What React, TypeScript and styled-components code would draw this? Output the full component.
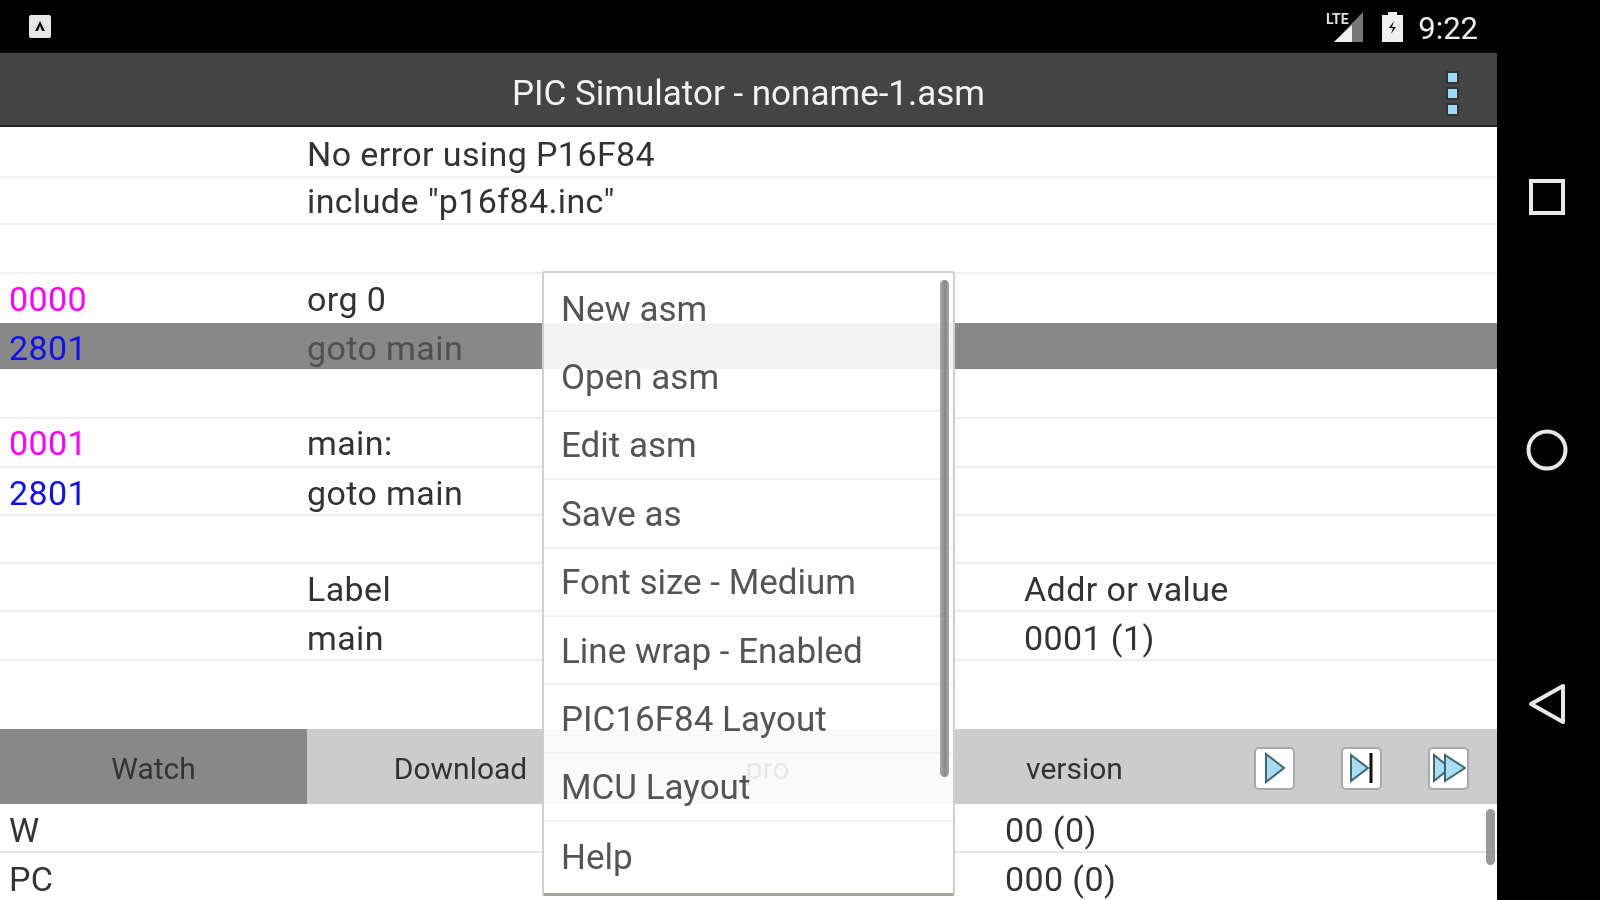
import React from 'react';
import styled, { createGlobalStyle } from 'styled-components';

const Global = createGlobalStyle`
  html, body { margin: 0; padding: 0; background: #000; }
  body { width: 1600px; height: 900px; overflow: hidden; font-family: Roboto, "Liberation Sans", sans-serif; }
`;

const Device = styled.div`
  width: 1600px; height: 900px; display: grid; grid-template-columns: 1497px 103px;
  background: #000; overflow: hidden; filter: blur(0.7px);
`;
const Main = styled.div`
  position: relative; display: flex; flex-direction: column; height: 900px; overflow: hidden; background: #fff;
`;
const StatusBar = styled.div`
  height: 53px; flex: none; background: #000; display: flex; align-items: center; padding: 0 19px 0 28px; color: #f0f0f0;
`;
const StatusRight = styled.div`
  margin-left: auto; display: flex; align-items: center;
`;
const Clock = styled.span`
  font-size: 31px; font-weight: 400; margin-left: 15px; padding-top: 4px; color: #eee;
`;
const AppBar = styled.div`
  position: relative; height: 64px; flex: none; background: #444; border-bottom: 2px solid #222;
  display: flex; align-items: center; justify-content: center; padding-top: 8px; box-sizing: content-box;
`;
const Title = styled.div`
  color: #f2f2f2; font-size: 35px; font-weight: 400; white-space: nowrap;
`;
const Kebab = styled.div`
  position: absolute; right: 40px; top: 20px; display: flex; flex-direction: column; gap: 7px;
`;
const Dot = styled.span`
  display: block; width: 9px; height: 9px; background: #9adcf2; box-shadow: 0 0 0 2px #333;
`;
const Row = styled.div<{ $h: number; $active?: boolean; $line?: boolean; $tight?: boolean }>`
  height: ${p => p.$h}px; flex: none; box-sizing: border-box;
  display: grid; grid-template-columns: 307px 717px 1fr; align-items: center;
  padding-top: ${p => (p.$tight ? '0' : '4px')};
  background: ${p => (p.$active ? '#888' : '#fff')};
  border-bottom: ${p => (p.$active ? '0' : p.$line === false ? '0' : '2px solid #eee')};
  font-size: 34px; letter-spacing: 0.4px; color: ${p => (p.$active ? '#505050' : '#333')}; white-space: nowrap;
`;
const Cell = styled.span<{ $color?: string }>`
  padding-left: ${p => (p.$color ? '9px' : '0')};
  color: ${p => p.$color || 'inherit'};
`;
const WatchRow = styled.div<{ $h: number; $line?: boolean }>`
  height: ${p => p.$h}px; flex: none; box-sizing: border-box;
  display: grid; grid-template-columns: 1005px 1fr; align-items: center; padding-top: 4px;
  border-bottom: ${p => (p.$line ? '2px solid #e6e6e6' : '0')};
  font-size: 34px; letter-spacing: 0.4px; color: #333; white-space: nowrap;
`;
const WatchName = styled.span`
  padding-left: 9px;
`;
const Toolbar = styled.div`
  height: 75px; flex: none; display: flex; background: #ccc;
`;
const Tab = styled.div<{ $active?: boolean }>`
  width: 307px; flex: none; display: flex; align-items: center; justify-content: center;
  padding-top: 3px; box-sizing: border-box;
  background: ${p => (p.$active ? '#888' : 'transparent')};
  font-size: 30px; color: #333;
`;
const ToolButtons = styled.div`
  display: flex; align-items: center; gap: 46px; margin-left: 26px;
`;
const ToolButton = styled.div`
  width: 41px; height: 43px; box-sizing: border-box; background: #fff; border: 2px solid #aaa; border-radius: 5px;
  display: flex; align-items: center; justify-content: center; margin-top: 3px; overflow: hidden;
`;
const WatchScroll = styled.div`
  position: absolute; left: 1486px; top: 809px; width: 9px; height: 56px; border-radius: 5px; background: #999;
`;
const Menu = styled.div`
  position: absolute; left: 542px; top: 271px; width: 413px; height: 625px; box-sizing: border-box;
  background: rgba(255, 255, 255, 0.89); border: 2px solid #d0d0ca; border-bottom: 3px solid #a5a59f; border-radius: 3px;
  padding-top: 2px; display: flex; flex-direction: column;
`;
const MenuItem = styled.div<{ $last?: boolean }>`
  height: 68.4px; flex: none; box-sizing: border-box; padding-left: 17px; padding-top: 2px;
  display: flex; align-items: center; font-size: 35px; color: #555; white-space: nowrap;
  border-bottom: ${p => (p.$last ? '0' : '2px solid #f3f3f3')};
`;
const MenuScroll = styled.div`
  position: absolute; right: 4px; top: 7px; width: 9px; height: 497px; border-radius: 5px;
  background: linear-gradient(90deg, #aaa, #888 60%, #aaa);
`;
const Nav = styled.div`
  height: 900px; background: #000; display: flex; flex-direction: column; align-items: center; padding: 178px 3px 0 0;
  box-sizing: border-box;
`;
const NavSlot = styled.div<{ $mt: number }>`
  margin-top: ${p => p.$mt}px; display: flex;
`;
const StatusGap = styled.span`
  width: 18px;
`;

const rows: { h: number; a?: string; ac?: string; b?: string; c?: string; active?: boolean; line?: boolean; tight?: boolean }[] = [
  { h: 51, b: 'No error using P16F84' },
  { h: 47, b: 'include "p16f84.inc"', tight: true },
  { h: 49 },
  { h: 49, a: '0000', ac: '#f0f', b: 'org 0', line: false, tight: true },
  { h: 46, a: '2801', ac: '#11e', b: 'goto main', active: true },
  { h: 50 },
  { h: 49, a: '0001', ac: '#f0f', b: 'main:', tight: true },
  { h: 48, a: '2801', ac: '#11e', b: 'goto main' },
  { h: 48 },
  { h: 48, b: 'Label', c: 'Addr or value' },
  { h: 49, b: 'main', c: '0001 (1)' },
  { h: 68, line: false },
];

const menuItems = ['New asm', 'Open asm', 'Edit asm', 'Save as', 'Font size - Medium', 'Line wrap - Enabled', 'PIC16F84 Layout', 'MCU Layout', 'Help'];

const AIcon = () => (
  <svg width="24" height="25" viewBox="0 0 24 25">
    <rect x="1" y="1" width="22" height="23" rx="2" fill="#e8e8e8" />
    <path d="M7 17 L12 7 L17 17 L14 17 L12 12 L10 17 Z" fill="#111" />
  </svg>
);
const SignalIcon = () => (
  <svg width="38" height="34" viewBox="0 0 38 34">
    <path d="M37 2 L37 32 L8 32 Z" fill="#777" />
    <path d="M26 15 L26 32 L8 32 Z" fill="#f0f0f0" />
    <text x="0" y="14" fontSize="14" fontWeight="700" fill="#ddd" fontFamily="Roboto, sans-serif">LTE</text>
  </svg>
);
const BatteryIcon = () => (
  <svg width="21" height="30" viewBox="0 0 21 30">
    <path d="M6 0 H15 V3 H21 V30 H0 V3 H6 Z" fill="#f0f0f0" />
    <path d="M12 9 L7 16 H11 L9 22 L14 15 H10 Z" fill="#111" />
  </svg>
);
const PlayIcon = () => (
  <svg width="28" height="34" viewBox="0 0 28 34">
    <path d="M5 3 L23 17 L5 31 Z" fill="#a9def2" stroke="#3d6670" strokeWidth="2" />
  </svg>
);
const StepIcon = () => (
  <svg width="30" height="34" viewBox="0 0 30 34">
    <path d="M4 4 L21 17 L4 30 Z" fill="#a9def2" stroke="#3d6670" strokeWidth="2" />
    <path d="M24 2 V32" stroke="#111" strokeWidth="3" />
  </svg>
);
const FastIcon = () => (
  <svg width="34" height="34" viewBox="0 0 34 34">
    <path d="M2 4 L18 17 L2 30 Z" fill="#a9def2" stroke="#3d6670" strokeWidth="2" />
    <path d="M13 4 L33 17 L13 30 Z" fill="#a9def2" stroke="#3d6670" strokeWidth="2" />
  </svg>
);

export default function App() {
  return (
    <>
      <Global />
      <Device>
        <Main>
          <StatusBar>
            <AIcon />
            <StatusRight>
              <SignalIcon />
              <StatusGap />
              <BatteryIcon />
              <Clock>9:22</Clock>
            </StatusRight>
          </StatusBar>
          <AppBar>
            <Title>PIC Simulator - noname-1.asm</Title>
            <Kebab><Dot /><Dot /><Dot /></Kebab>
          </AppBar>
          {rows.map((r, i) => (
            <Row key={i} $h={r.h} $active={r.active} $line={r.line} $tight={r.tight}>
              <Cell $color={r.ac}>{r.a}</Cell>
              <Cell>{r.b}</Cell>
              <Cell>{r.c}</Cell>
            </Row>
          ))}
          <Toolbar>
            <Tab $active>Watch</Tab>
            <Tab>Download</Tab>
            <Tab>pro</Tab>
            <Tab>version</Tab>
            <ToolButtons>
              <ToolButton><PlayIcon /></ToolButton>
              <ToolButton><StepIcon /></ToolButton>
              <ToolButton><FastIcon /></ToolButton>
            </ToolButtons>
          </Toolbar>
          <WatchRow $h={49} $line><WatchName>W</WatchName><span>00 (0)</span></WatchRow>
          <WatchRow $h={48}><WatchName>PC</WatchName><span>000 (0)</span></WatchRow>
          <WatchScroll />
          <Menu>
            {menuItems.map((m, i) => (
              <MenuItem key={m} $last={i === menuItems.length - 1}>{m}</MenuItem>
            ))}
            <MenuScroll />
          </Menu>
        </Main>
        <Nav>
          <NavSlot $mt={0}>
            <svg width="38" height="38" viewBox="0 0 38 38"><rect x="3" y="3" width="32" height="32" fill="none" stroke="#e8e8e8" strokeWidth="4" /></svg>
          </NavSlot>
          <NavSlot $mt={212}>
            <svg width="44" height="44" viewBox="0 0 44 44"><circle cx="22" cy="22" r="18.5" fill="none" stroke="#e8e8e8" strokeWidth="4" /></svg>
          </NavSlot>
          <NavSlot $mt={211}>
            <svg width="40" height="42" viewBox="0 0 40 42"><path d="M36 3 L36 39 L4 21 Z" fill="none" stroke="#e8e8e8" strokeWidth="4" strokeLinejoin="round" /></svg>
          </NavSlot>
        </Nav>
      </Device>
    </>
  );
}
